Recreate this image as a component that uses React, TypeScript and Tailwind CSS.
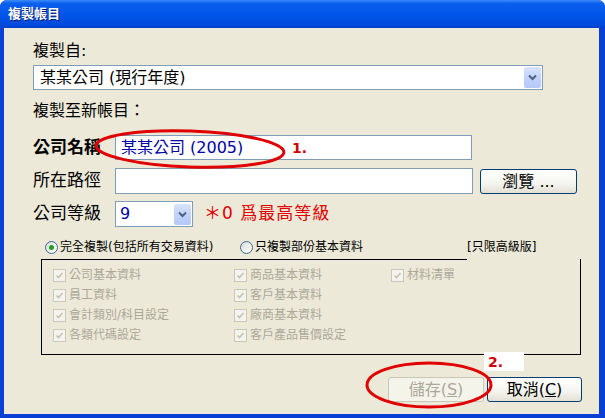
import React from "react";

const LEFT_ITEMS = ["公司基本資料", "員工資料", "會計類別/科目設定", "各類代碼設定"];
const MID_ITEMS = ["商品基本資料", "客戶基本資料", "廠商基本資料", "客戶產品售價設定"];
const RIGHT_ITEMS = ["材料清單"];

function DropButton() {
  return (
    <div className="w-[17px] h-[21px] mr-[1px] rounded-[2px] bg-[linear-gradient(180deg,#d8e4fd_0%,#c1d3fb_50%,#b4c8f6_100%)] flex items-center justify-center">
      <svg width="9" height="7" viewBox="0 0 9 7">
        <path d="M1 1.5 L4.5 5 L8 1.5" fill="none" stroke="#4d6185" strokeWidth="2" />
      </svg>
    </div>
  );
}

function DisabledCheck({ label }: { label: string }) {
  return (
    <div className="flex items-center h-[20px] gap-[3px]">
      <div className="w-[13px] h-[13px] border border-[#cac8bb] bg-[#f4f3ee] flex items-center justify-center">
        <svg width="9" height="9" viewBox="0 0 9 9">
          <path d="M1.5 4.5 L3.5 6.5 L7.5 2" fill="none" stroke="#c5c2b2" strokeWidth="1.6" />
        </svg>
      </div>
      <span className="text-[12px] text-[#aca899] leading-none">{label}</span>
    </div>
  );
}

function Radio({ checked, label }: { checked?: boolean; label: string }) {
  return (
    <div className="flex items-center gap-[2px]">
      <div className="w-[13px] h-[13px] rounded-full border border-[#3d6a99] bg-[linear-gradient(135deg,#dcdbd4_0%,#ffffff_100%)] flex items-center justify-center">
        {checked && <div className="w-[5px] h-[5px] rounded-full bg-[#21a121]" />}
      </div>
      <span className="text-[12px] text-black leading-none">{label}</span>
    </div>
  );
}

export default function App() {
  return (
    <div className="relative w-[605px] h-[418px] bg-[#0a3fd6] rounded-t-[7px] overflow-hidden flex flex-col font-['DejaVu_Sans','Noto_Sans_CJK_TC',sans-serif]">
      {/* Title bar */}
      <div className="h-[28px] shrink-0 flex items-center pl-[8px] bg-[linear-gradient(180deg,#3b8cf8_0%,#0b5fee_12%,#0056e8_55%,#0049dc_90%,#003fc8_100%)]">
        <span className="text-[13px] font-bold text-white [text-shadow:1px_1px_0_#0a1e6e]">複製帳目</span>
      </div>

      {/* Body */}
      <div className="flex-1 ml-[4px] mr-[6px] mb-[4px] bg-[#ece9d8] flex flex-col pl-[29px] pt-[13px]">
        <div className="text-[16px] leading-[20px] text-black">複製自:</div>
        <div className="mt-[4px] w-[510px] h-[25px] bg-white border border-[#7f9db9] flex items-center justify-between pl-[6px]">
          <span className="text-[16px] text-black">某某公司 (現行年度)</span>
          <DropButton />
        </div>

        <div className="mt-[11px] text-[16px] leading-[20px] text-black">複製至新帳目：</div>

        <div className="mt-[14px] flex items-center h-[25px]">
          <span className="w-[82px] text-[17px] font-bold text-black">公司名稱</span>
          <div className="w-[357px] h-[25px] bg-white border border-[#7f9db9] flex items-center pl-[5px]">
            <span className="text-[16px] text-[#0000a8]">某某公司 (2005)</span>
          </div>
        </div>

        <div className="mt-[8px] flex items-center h-[26px]">
          <span className="w-[82px] text-[17px] text-black">所在路徑</span>
          <div className="w-[358px] h-[26px] bg-white border border-[#7f9db9]" />
          <button className="ml-[7px] w-[97px] h-[25px] rounded-[3px] border border-[#003c74] bg-[linear-gradient(180deg,#ffffff_0%,#f4f4ef_60%,#e3e0d4_100%)] text-[16px] text-black">
            瀏覽 ...
          </button>
        </div>

        <div className="mt-[7px] flex items-center h-[26px]">
          <span className="w-[82px] text-[17px] text-black">公司等級</span>
          <div className="w-[78px] h-[26px] bg-white border border-[#7f9db9] flex items-center justify-between pl-[4px]">
            <span className="text-[16px] text-[#0000a8]">9</span>
            <DropButton />
          </div>
          <span className="ml-[11px] text-[17px] tracking-[1px] text-[#e00000]">＊0 爲最高等級</span>
        </div>

        <div className="mt-[12px] h-[16px] flex items-center pl-[12px]">
          <div className="w-[195px]">
            <Radio checked label="完全複製(包括所有交易資料)" />
          </div>
          <div className="w-[227px]">
            <Radio label="只複製部份基本資料" />
          </div>
          <span className="text-[12px] text-black leading-none">[只限高級版]</span>
        </div>

        {/* Group box */}
        <div className="relative mt-[4px] ml-[8px] w-[540px] h-[96px] border-l border-r border-b border-black">
          <div className="absolute top-0 left-0 w-[425px] h-[1px] bg-black" />
          <div className="flex pt-[6px] pl-[11px]">
            <div className="w-[181px] flex flex-col">
              {LEFT_ITEMS.map((t) => (
                <DisabledCheck key={t} label={t} />
              ))}
            </div>
            <div className="w-[157px] flex flex-col">
              {MID_ITEMS.map((t) => (
                <DisabledCheck key={t} label={t} />
              ))}
            </div>
            <div className="flex flex-col">
              {RIGHT_ITEMS.map((t) => (
                <DisabledCheck key={t} label={t} />
              ))}
            </div>
          </div>
        </div>

        {/* Buttons */}
        <div className="mt-[22px] flex pl-[355px] gap-[3px]">
          <button className="w-[96px] h-[25px] rounded-[3px] border border-[#c9c7ba] bg-[#f5f4ea] text-[16px] text-[#aca899]">
            儲存(<span className="underline">S</span>)
          </button>
          <button className="w-[95px] h-[25px] rounded-[3px] border border-[#003c74] bg-[linear-gradient(180deg,#ffffff_0%,#f4f4ef_60%,#e3e0d4_100%)] text-[16px] text-black">
            取消(<span className="underline">C</span>)
          </button>
        </div>
      </div>

      {/* Annotations */}
      <div className="absolute left-[484px] top-[352px] w-[40px] h-[19px] bg-white flex items-center pl-[4px]">
        <span className="text-[14px] font-bold text-[#d00000] leading-none">2.</span>
      </div>
      <span className="absolute left-[292px] top-[141px] text-[14px] font-bold text-[#d00000] leading-none">1.</span>
      <svg className="absolute inset-0 pointer-events-none" width="605" height="418" viewBox="0 0 605 418">
        <ellipse cx="190" cy="149" rx="94" ry="18" fill="none" stroke="#e00000" strokeWidth="3" transform="rotate(2 190 149)" />
        <ellipse cx="429" cy="385" rx="62" ry="22" fill="none" stroke="#e00000" strokeWidth="3" />
      </svg>
    </div>
  );
}
